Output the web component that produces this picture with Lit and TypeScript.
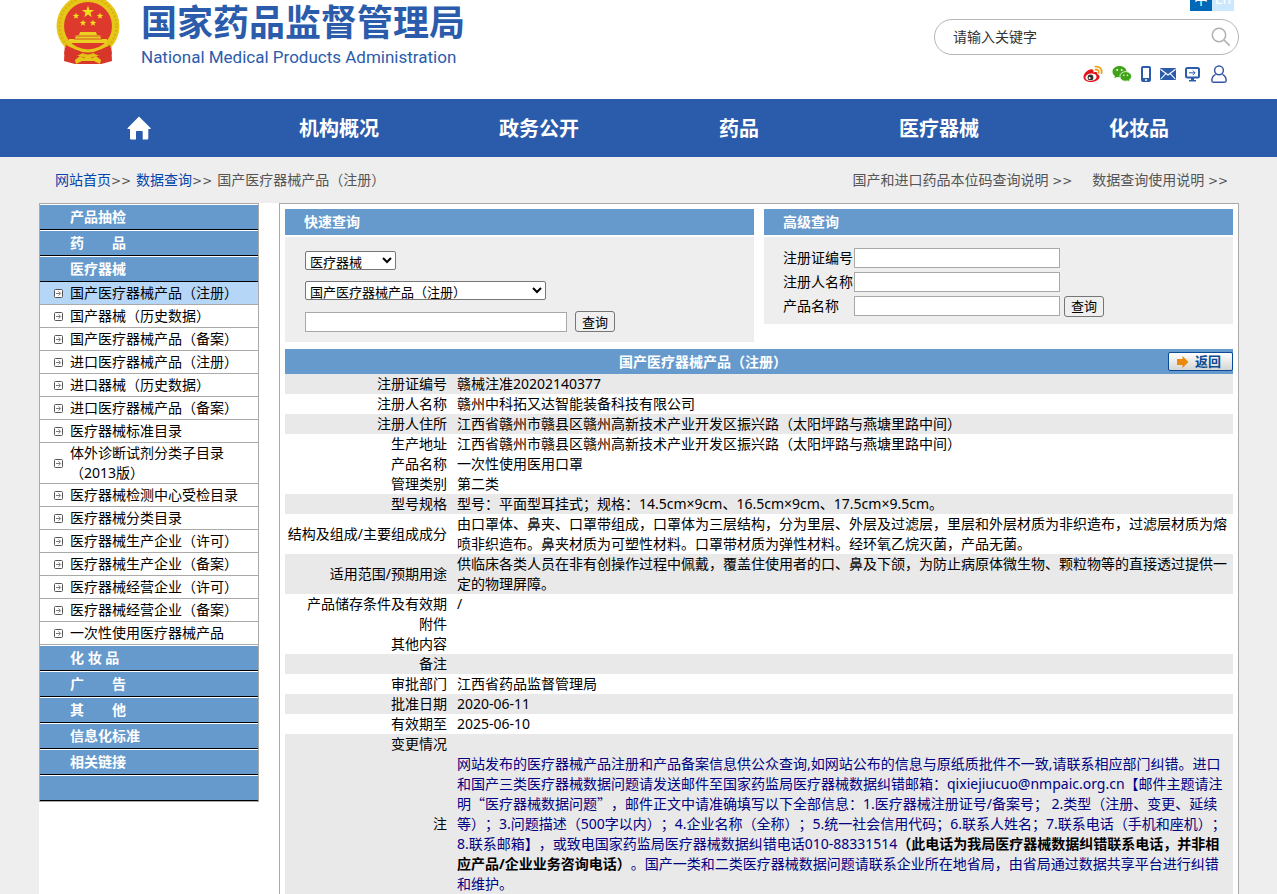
import { LitElement, html, css, svg } from "lit";
import { customElement, state } from "lit/decorators.js";
import { classMap } from "lit/directives/class-map.js";

const NAV = ["机构概况", "政务公开", "药品", "医疗器械", "化妆品"];

const GROUPS_TOP = ["产品抽检", "药\u3000\u3000品", "医疗器械"];
const GROUPS_BOTTOM = ["化 妆 品", "广\u3000\u3000告", "其\u3000\u3000他", "信息化标准", "相关链接", ""];

const ITEMS = [
  "国产医疗器械产品（注册）",
  "国产器械（历史数据）",
  "国产医疗器械产品（备案）",
  "进口医疗器械产品（注册）",
  "进口器械（历史数据）",
  "进口医疗器械产品（备案）",
  "医疗器械标准目录",
  "体外诊断试剂分类子目录（2013版）",
  "医疗器械检测中心受检目录",
  "医疗器械分类目录",
  "医疗器械生产企业（许可）",
  "医疗器械生产企业（备案）",
  "医疗器械经营企业（许可）",
  "医疗器械经营企业（备案）",
  "一次性使用医疗器械产品",
];

interface Row {
  label: string;
  value: string;
  shaded?: boolean;
}

const ROWS: Row[] = [
  { label: "注册证编号", value: "赣械注准20202140377", shaded: true },
  { label: "注册人名称", value: "赣州中科拓又达智能装备科技有限公司" },
  { label: "注册人住所", value: "江西省赣州市赣县区赣州高新技术产业开发区振兴路（太阳坪路与燕塘里路中间）", shaded: true },
  { label: "生产地址", value: "江西省赣州市赣县区赣州高新技术产业开发区振兴路（太阳坪路与燕塘里路中间）" },
  { label: "产品名称", value: "一次性使用医用口罩" },
  { label: "管理类别", value: "第二类" },
  { label: "型号规格", value: "型号：平面型耳挂式；规格：14.5cm×9cm、16.5cm×9cm、17.5cm×9.5cm。", shaded: true },
  { label: "结构及组成/主要组成成分", value: "由口罩体、鼻夹、口罩带组成，口罩体为三层结构，分为里层、外层及过滤层，里层和外层材质为非织造布，过滤层材质为熔喷非织造布。鼻夹材质为可塑性材料。口罩带材质为弹性材料。经环氧乙烷灭菌，产品无菌。" },
  { label: "适用范围/预期用途", value: "供临床各类人员在非有创操作过程中佩戴，覆盖住使用者的口、鼻及下颌，为防止病原体微生物、颗粒物等的直接透过提供一定的物理屏障。", shaded: true },
  { label: "产品储存条件及有效期", value: "/" },
  { label: "附件", value: "" },
  { label: "其他内容", value: "" },
  { label: "备注", value: "", shaded: true },
  { label: "审批部门", value: "江西省药品监督管理局" },
  { label: "批准日期", value: "2020-06-11", shaded: true },
  { label: "有效期至", value: "2025-06-10" },
  { label: "变更情况", value: "", shaded: true },
];

const star = (cx: number, cy: number, r: number) => {
  const pts = Array.from({ length: 10 }, (_, i) => {
    const a = -Math.PI / 2 + (i * Math.PI) / 5;
    const d = i % 2 ? r * 0.4 : r;
    return `${(cx + d * Math.cos(a)).toFixed(2)},${(cy + d * Math.sin(a)).toFixed(2)}`;
  }).join(" ");
  return svg`<polygon points=${pts} fill="#f3dc1c"/>`;
};

const emblem = html`<svg class="emblem" viewBox="0 0 64 70" aria-hidden="true">
  <path d="M9 48 L8 67 L15 69 L19 70 L45 70 L49 69 L56 67 L55 48Z" fill="#d8352b"/>
  <circle cx="32" cy="32" r="31.500" fill="#e6c619"/>
  <circle cx="32" cy="32" r="28.500" fill="none" stroke="#d6b10f" stroke-width="2" stroke-dasharray="2 2"/>
  <circle cx="32" cy="32" r="24" fill="#dd392d"/>
  ${star(32, 18, 6.5)} ${star(20, 22, 3.5)} ${star(44, 22, 3.5)} ${star(27, 29, 3.5)} ${star(37, 29, 3.5)}
  <path d="M24 38h16l1 3h3l1 4h6v4H13v-4h6l1-4h3z" fill="#ecd021"/>
  <path d="M20 42h24M18 45h28" stroke="#d3562a" stroke-width="1"/>
  <path d="M10 51 Q20 57 28 56 L36 56 Q44 57 54 51 L56 60 Q44 64 37 59 L32 61 L27 59 Q20 64 8 60Z" fill="#d8352b"/>
  <path d="M11 47 Q18 56 32 57 Q46 56 53 47" fill="none" stroke="#e6c619" stroke-width="3"/>
  <path d="M19 66 L24 62 L28 64 L32 60 L36 64 L40 62 L45 66 L44 70 L38 67 L26 67 L20 70Z" fill="#e6c619"/>
</svg>`;

const weibo = html`<svg width="20" height="18" viewBox="0 0 20 18" aria-hidden="true">
  <path d="M8.500 4.200C4.500 4.500.500 8.500.500 12c0 3.200 3.500 5 7.500 5 5 0 8.500-2.700 8.500-5.300 0-1.400-1-2.100-2.300-2.500.6-1.700-.6-2.800-3.700-1.600.4-2-.3-3.500-2-3.400z" fill="#e2131c"/>
  <ellipse cx="8" cy="12.200" rx="5.600" ry="3.700" fill="#fff" transform="rotate(-8 8 12.200)"/>
  <circle cx="7.500" cy="12.400" r="2.900" fill="#333"/><circle cx="6.600" cy="13" r="1" fill="#fff"/>
  <path d="M12.500 4.600c2-.4 3.600 1 3.200 3.200M12.500 1.700c3.900-.7 6.900 2.200 6 6.500" fill="none" stroke="#efa21b" stroke-width="1.800" stroke-linecap="round"/>
</svg>`;

const wechat = html`<svg width="20" height="18" viewBox="0 0 20 18" aria-hidden="true">
  <path d="M7.500 1C3.500 1 .500 3.500.500 6.700c0 1.800 1 3.300 2.500 4.300l-.6 2.200 2.500-1.300c.8.200 1.700.3 2.600.3 4 0 7-2.400 7-5.500S11.500 1 7.500 1z" fill="#3fa516"/>
  <circle cx="5.200" cy="5" r="1" fill="#fff"/><circle cx="9.700" cy="5" r="1" fill="#fff"/>
  <path d="M13.700 6.600c-3.300 0-5.800 2.100-5.800 4.800s2.500 4.800 5.800 4.800c.7 0 1.300-.1 1.900-.3l2.100 1.100-.5-1.900c1.400-.8 2.300-2.200 2.300-3.700 0-2.700-2.600-4.800-5.800-4.800z" fill="#3fa516" stroke="#fff" stroke-width=".8"/>
  <circle cx="11.900" cy="10.200" r=".8" fill="#fff"/><circle cx="15.500" cy="10.200" r=".8" fill="#fff"/>
</svg>`;

const phone = html`<svg width="10" height="16" viewBox="0 0 10 16" aria-hidden="true">
  <rect width="10" height="16" rx="2" fill="#2b5cab"/><rect x="2" y="2" width="6" height="10" fill="#fff"/><circle cx="5" cy="14" r="1" fill="#fff"/>
</svg>`;

const mail = html`<svg width="16" height="12" viewBox="0 0 16 12" aria-hidden="true">
  <rect width="16" height="12" rx="1" fill="#2b5cab"/>
  <path d="M.5 1.200 8 7l7.500-5.800M.8 11 5.800 5.600M15.200 11l-5-5.400" fill="none" stroke="#fff" stroke-width="1.100"/>
</svg>`;

const monitor = html`<svg width="15" height="15" viewBox="0 0 15 15" aria-hidden="true">
  <rect x="1" y="1" width="13" height="9.500" rx="1.500" fill="none" stroke="#2b5cab" stroke-width="2"/>
  <path d="M4 5.800h6M7.800 3.600 10 5.800 7.800 8" fill="none" stroke="#2b5cab" stroke-width="1"/>
  <path d="M6 11h3v2h2v1.500H4V13h2z" fill="#2b5cab"/>
</svg>`;

const user = html`<svg width="16" height="18" viewBox="0 0 16 18" aria-hidden="true">
  <circle cx="8" cy="5.300" r="4.400" fill="none" stroke="#3558a8" stroke-width="1.500"/>
  <path d="M4.600 9.300C2.200 10.500.8 12.700.8 15.500c0 1.200.5 1.700 1.600 1.700h11.200c1.100 0 1.600-.5 1.600-1.700 0-2.800-1.400-5-3.800-6.200" fill="none" stroke="#3558a8" stroke-width="1.500"/>
</svg>`;

const magnifier = html`<svg width="20" height="20" viewBox="0 0 20 20" aria-hidden="true">
  <circle cx="8" cy="8" r="6.700" fill="none" stroke="#b0b0b0" stroke-width="1.500"/>
  <path d="M13 13l5.700 5.700" stroke="#b0b0b0" stroke-width="1.700"/>
</svg>`;

const home = html`<svg width="24" height="24" viewBox="0 0 24 24" aria-hidden="true">
  <path d="M12 .5 23.500 12c.5.600.2 1-.5 1h-1.700v9.200c0 .8-.5 1.300-1.300 1.300h-4.300V16c0-.7-.3-1-1-1H10c-.7 0-1 .3-1 1v7.500H4.300c-.8 0-1.300-.5-1.300-1.300V13H1.200c-.8 0-1-.4-.5-1z" fill="#fff"/>
</svg>`;

const bullet = html`<svg class="bullet" width="9" height="9" viewBox="0 0 9 9" aria-hidden="true">
  <rect x=".5" y=".5" width="8" height="8" rx="1" fill="#fff" stroke="#555"/>
  <path d="M2 4.500h4M4.500 2.300l2.200 2.200-2.200 2.200" fill="none" stroke="#555" stroke-width=".8"/>
</svg>`;

const orangeArrow = html`<svg width="12" height="12" viewBox="0 0 12 12" aria-hidden="true">
  <path d="M0 3h5.500V0L11.500 6l-6 6V9H0z" fill="#ea8a0c"/>
</svg>`;

@customElement("app-root")
export class AppRoot extends LitElement {
  @state() private active = 0;

  static styles = css`
    :host {
      display: block;
      min-height: 100vh;
      background: #eee;
      color: #000;
      font: 14px/20px "Noto Sans", "Noto Sans CJK SC", sans-serif;
      text-spacing-trim: space-all;
    }
    * { box-sizing: border-box; }
    a { color: inherit; text-decoration: none; }
    svg { display: block; }
    input, select, button { font-family: inherit; margin: 0; }
    .wrap { padding: 0 38px 0 39px; }

    .top { background: #fff; height: 99px; overflow: hidden; }
    .top .wrap { display: flex; justify-content: space-between; }
    .brand { display: flex; gap: 21px; padding-left: 17px; color: #2b5cab; }
    .emblem { width: 64px; height: 70px; margin-top: -6px; }
    .brand-text { display: flex; flex-direction: column; gap: 4px; }
    .brand h1 { margin: 0; font: bold 36px/40px "Noto Sans CJK SC", sans-serif; white-space: nowrap; }
    .brand p { margin: 0; font: 17px/26px Roboto, sans-serif; white-space: nowrap; }
    .tools { width: 305px; }
    .langs { display: flex; justify-content: flex-end; padding-right: 5px; margin-top: -11px; }
    .langs a { width: 22px; height: 22px; line-height: 20px; text-align: center; color: #fff; background: #cce8ff; }
    .langs .on { background: #0068b7; }
    .search { display: flex; align-items: center; margin-top: 8px; height: 36px; padding: 0 7px 0 18px; border: 1px solid #b5b5b5; border-radius: 18px; }
    .search input { flex: 1; min-width: 0; height: 30px; padding: 0 0 2px; border: 0; outline: 0; background: none; font-size: 14px; color: #333; }
    .search input::placeholder { color: #333; opacity: 1; }
    .search button { padding: 0; border: 0; background: none; }
    .social { display: flex; justify-content: flex-end; align-items: center; gap: 9px; padding-right: 12px; height: 38px; }
    .social a:last-child { padding-left: 2px; }

    .nav { background: #2b5cab; }
    .nav ul { display: grid; grid-template-columns: repeat(6, 1fr); margin: 0; padding: 0; list-style: none; }
    .nav a { display: flex; justify-content: center; align-items: center; height: 58px; color: #fff; font-size: 20px; font-weight: bold; }
    .nav span { padding-top: 2px; }

    .crumbs { display: flex; justify-content: space-between; padding: 13px 11px 13px 16px; height: 46px; color: #555; }
    .crumbs .blue { color: #0645ad; }
    .path, .help { display: flex; gap: 5px; }
    .help { gap: 20px; }
    .gt { font: 12px/20px "DejaVu Sans", sans-serif; }

    .main { display: flex; gap: 20px; background: #fff; align-items: flex-start; min-height: calc(100vh - 203px); }
    .side { width: 220px; flex: none; border: 1px solid #aaa; }
    .side ul { margin: 0; padding: 0; list-style: none; }
    .group { display: block; height: 26px; padding-left: 30px; border-top: 1px solid #fff; border-bottom: 1px solid #000; background: #669acd; color: #fff; font-weight: bold; line-height: 24px; }
    .item { display: flex; align-items: center; gap: 7px; padding: 0 2px 0 14px; min-height: 23px; border-bottom: 1px solid #aaa; line-height: 20px; }
    .item.on { background: #b5d6f7; }
    .bullet { flex: none; }

    .content { flex: 1; min-width: 0; align-self: stretch; padding: 5px; border: 1px solid #aaa; border-bottom: 0; }
    .panels { display: grid; grid-template-columns: 1fr 1fr; gap: 10px; align-items: start; margin-bottom: 7px; }
    .panel h2 { margin: 0 0 2px; padding-left: 19px; background: #669acd; color: #fff; font-size: 14px; line-height: 26px; }
    .fields { display: flex; flex-direction: column; align-items: flex-start; gap: 11px; padding: 14px 20px 10px; background: #eee; }
    .line { display: flex; align-items: center; gap: 8px; }
    .box { height: 20px; border: 1px solid #a9a9a9; background: #fff; padding: 1px 2px; font-size: 13px; }
    .btn { width: 40px; height: 21px; padding: 0; border: 1px solid #767676; border-radius: 3px; background: #efefef; color: #000; font-size: 13px; line-height: 18px; }
    .pick { height: 19px; border: 1px solid #767676; border-radius: 2px; background: #fff; color: #000; padding: 0; font-size: 13px; }
    .kind { width: 91px; }
    .set { width: 241px; }
    .word { width: 262px; }
    .fields.adv { gap: 4px; padding: 11px 19px 8px; }
    .adv .line { gap: 4px; height: 20px; }
    .adv label { display: flex; align-items: center; }
    .adv span { width: 71px; white-space: nowrap; }
    .adv .box { width: 206px; }

    .title { display: flex; align-items: center; height: 25px; background: #669acd; color: #fff; }
    .title h3 { flex: 1; margin: 0; text-align: center; font-size: 14px; }
    .title div { display: flex; justify-content: flex-end; width: 112px; }
    .back { display: flex; align-items: center; gap: 6px; width: 65px; height: 19px; padding: 0 0 0 8px; border: 1px solid #0b4a94; border-radius: 2px; background: linear-gradient(#fff, #d5d5d5); color: #0b4a94; font-size: 13px; font-weight: bold; line-height: 17px; }
    .data { width: 100%; border-collapse: collapse; table-layout: fixed; }
    .data th { width: 162px; padding: 0; font-weight: normal; text-align: right; vertical-align: middle; white-space: nowrap; }
    .data td { height: 20px; padding: 0 4px 0 10px; }
    .data .shaded { background: #e9e9e9; }
    .data .note { color: #000080; }
    .note strong { color: #000; }
    .cjk { font-family: "Noto Sans CJK SC", sans-serif; line-height: 14px; }
  `;

  private group(name: string) {
    return html`<li><a class="group" href="#">${name}</a></li>`;
  }

  render() {
    const gt = html`<span class="gt">&gt;&gt;</span>`;
    return html`
      <header class="top">
        <div class="wrap">
          <div class="brand">
            ${emblem}
            <div class="brand-text">
              <h1>国家药品监督管理局</h1>
              <p>National Medical Products Administration</p>
            </div>
          </div>
          <div class="tools">
            <div class="langs"><a class="on" href="#">中</a><a href="#">En</a></div>
            <form class="search" @submit=${(e: Event) => e.preventDefault()}>
              <input type="text" placeholder="请输入关键字" aria-label="请输入关键字" />
              <button aria-label="搜索">${magnifier}</button>
            </form>
            <div class="social">
              <a href="#" aria-label="微博">${weibo}</a>
              <a href="#" aria-label="微信">${wechat}</a>
              <a href="#" aria-label="手机">${phone}</a>
              <a href="#" aria-label="邮箱">${mail}</a>
              <a href="#" aria-label="电脑">${monitor}</a>
              <a href="#" aria-label="用户">${user}</a>
            </div>
          </div>
        </div>
      </header>
      <nav class="nav">
        <div class="wrap">
          <ul>
            <li><a href="#" aria-label="首页">${home}</a></li>
            ${NAV.map((n) => html`<li><a href="#"><span>${n}</span></a></li>`)}
          </ul>
        </div>
      </nav>
      <div class="wrap">
        <div class="crumbs">
          <div class="path">
            <span><a class="blue" href="#">网站首页</a>${gt}</span>
            <span><a class="blue" href="#">数据查询</a>${gt}</span>
            <span>国产医疗器械产品（注册）</span>
          </div>
          <div class="help">
            <a href="#">国产和进口药品本位码查询说明 ${gt}</a>
            <a href="#">数据查询使用说明 ${gt}</a>
          </div>
        </div>
        <main class="main">
          <aside class="side">
            <ul>
              ${GROUPS_TOP.map((g) => this.group(g))}
              ${ITEMS.map(
                (t, i) => html`<li>
                  <a class=${classMap({ item: true, on: i === this.active })} href="#" @click=${() => (this.active = i)}>${bullet}<span>${t}</span></a>
                </li>`
              )}
              ${GROUPS_BOTTOM.map((g) => this.group(g))}
            </ul>
          </aside>
          <section class="content">
            <div class="panels">
              <section class="panel">
                <h2>快速查询</h2>
                <div class="fields">
                  <select class="pick kind" aria-label="类别"><option>医疗器械</option></select>
                  <select class="pick set" aria-label="数据库"><option>国产医疗器械产品（注册）</option></select>
                  <div class="line"><input class="box word" type="text" aria-label="关键字" /><button class="btn">查询</button></div>
                </div>
              </section>
              <section class="panel">
                <h2>高级查询</h2>
                <div class="fields adv">
                  <div class="line"><label><span>注册证编号</span><input class="box" type="text" /></label></div>
                  <div class="line"><label><span>注册人名称</span><input class="box" type="text" /></label></div>
                  <div class="line"><label><span>产品名称</span><input class="box" type="text" /></label><button class="btn">查询</button></div>
                </div>
              </section>
            </div>
            <div class="title">
              <h3>国产医疗器械产品（注册）</h3>
              <div><button class="back">${orangeArrow}返回</button></div>
            </div>
            <table class="data">
              <tbody>
                ${ROWS.map(
                  (r) => html`<tr class=${classMap({ shaded: !!r.shaded })}><th scope="row">${r.label}</th><td>${r.value}</td></tr>`
                )}
                <tr class="shaded">
                  <th scope="row">注</th>
                  <td class="note">网站发布的医疗器械产品注册和产品备案信息供公众查询,如网站公布的信息与原纸质批件不一致,请联系相应部门纠错。进口和国产三类医疗器械数据问题请发送邮件至国家药监局医疗器械数据纠错邮箱：qixiejiucuo@nmpaic.org.cn【邮件主题请注明<span class="cjk">“医疗器械数据问题”</span>，邮件正文中请准确填写以下全部信息：1.医疗器械注册证号/备案号； 2.类型（注册、变更、延续等）；3.问题描述（500字以内）；4.企业名称（全称）；5.统一社会信用代码；6.联系人姓名；7.联系电话（手机和座机）；8.联系邮箱】，或致电国家药监局医疗器械数据纠错电话010-88331514<strong>（此电话为我局医疗器械数据纠错联系电话，并非相应产品/企业业务咨询电话）</strong>。国产一类和二类医疗器械数据问题请联系企业所在地省局，由省局通过数据共享平台进行纠错和维护。</td>
                </tr>
              </tbody>
            </table>
          </section>
        </main>
      </div>
    `;
  }
}
